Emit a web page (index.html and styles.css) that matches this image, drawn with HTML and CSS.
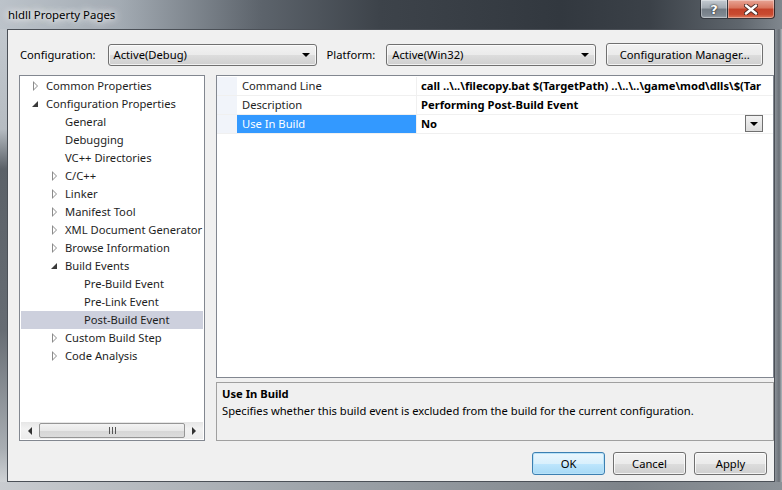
FILE: index.html
```html
<!DOCTYPE html>
<html lang="en">
<head>
    <meta charset="UTF-8">
    <title>hldll Property Pages</title>
    <link rel="stylesheet" href="styles.css">
</head>
<body>
    <div class="window">
        <div class="titlebar">
            <span class="title">hldll Property Pages</span>
            <div class="caption">
                <span class="cap-btn help">?</span>
                <span class="cap-btn close">
                    <svg width="14" height="11" viewBox="0 0 14 11">
                        <path d="M2 1.5 L12 9.5 M12 1.5 L2 9.5" stroke="#4a2a25" stroke-width="4.2" stroke-linecap="round"/>
                        <path d="M2 1.5 L12 9.5 M12 1.5 L2 9.5" stroke="#fff" stroke-width="2.4" stroke-linecap="round"/>
                    </svg>
                </span>
            </div>
        </div>

        <div class="frame-row">
            <div class="frame-side left"></div>
            <div class="client">
                <div class="toolbar">
                    <span class="label">Configuration:</span>
                    <div class="combo combo-config"><span>Active(Debug)</span><i class="arrow"></i></div>
                    <span class="label label-platform">Platform:</span>
                    <div class="combo combo-platform"><span>Active(Win32)</span><i class="arrow"></i></div>
                    <button class="btn btn-manager">Configuration Manager...</button>
                </div>

                <div class="main">
                    <div class="tree">
                        <ul class="tree-list">
                            <li class="lvl0"><i class="exp closed"></i>Common Properties</li>
                            <li class="lvl0"><i class="exp open"></i>Configuration Properties</li>
                            <li class="lvl1"><i class="exp"></i>General</li>
                            <li class="lvl1"><i class="exp"></i>Debugging</li>
                            <li class="lvl1"><i class="exp"></i>VC++ Directories</li>
                            <li class="lvl1"><i class="exp closed"></i>C/C++</li>
                            <li class="lvl1"><i class="exp closed"></i>Linker</li>
                            <li class="lvl1"><i class="exp closed"></i>Manifest Tool</li>
                            <li class="lvl1"><i class="exp closed"></i>XML Document Generator</li>
                            <li class="lvl1"><i class="exp closed"></i>Browse Information</li>
                            <li class="lvl1"><i class="exp open"></i>Build Events</li>
                            <li class="lvl2"><i class="exp"></i>Pre-Build Event</li>
                            <li class="lvl2"><i class="exp"></i>Pre-Link Event</li>
                            <li class="lvl2 selected"><i class="exp"></i>Post-Build Event</li>
                            <li class="lvl1"><i class="exp closed"></i>Custom Build Step</li>
                            <li class="lvl1"><i class="exp closed"></i>Code Analysis</li>
                        </ul>
                        <div class="hscroll">
                            <span class="sc-arrow sc-left"></span>
                            <div class="sc-thumb"><span class="grip"></span></div>
                            <span class="sc-arrow sc-right"></span>
                        </div>
                    </div>

                    <div class="right">
                        <div class="grid">
                            <div class="row">
                                <span class="margin"></span>
                                <span class="name">Command Line</span>
                                <span class="value">call ..\..\filecopy.bat $(TargetPath) ..\..\..\game\mod\dlls\$(Tar</span>
                            </div>
                            <div class="row">
                                <span class="margin"></span>
                                <span class="name">Description</span>
                                <span class="value">Performing Post-Build Event</span>
                            </div>
                            <div class="row active">
                                <span class="margin"></span>
                                <span class="name">Use In Build</span>
                                <span class="value">No<span class="drop"><i class="arrow"></i></span></span>
                            </div>
                        </div>
                        <div class="desc">
                            <div class="desc-title">Use In Build</div>
                            <div class="desc-text">Specifies whether this build event is excluded from the build for the current configuration.</div>
                        </div>
                    </div>
                </div>

                <div class="footer">
                    <button class="btn btn-ok">OK</button>
                    <button class="btn">Cancel</button>
                    <button class="btn">Apply</button>
                </div>
            </div>
            <div class="frame-side right-side"></div>
        </div>
        <div class="frame-bottom"></div>
    </div>
</body>
</html>
```

FILE: styles.css
```css
body {
    margin: 0;
    font-family: "Noto Sans", "Open Sans", sans-serif;
    font-size: 11.2px;
    color: #000;
    background: #6b7178;
}
.window {
    width: 782px;
    height: 490px;
    display: flex;
    flex-direction: column;
    overflow: hidden;
}
.titlebar {
    height: 29px;
    display: flex;
    background: linear-gradient(to right, #bcc3ca 0, #a3abb3 120px, #5d646c 260px, #3d434a 380px, #32383f 560px, #3b4148 650px, #5f666d 740px, #80878e 782px);
}
.title {
    padding-left: 8px;
    line-height: 30px;
    font-size: 11.4px;
    text-shadow: 0 0 6px #fff, 0 0 10px rgba(255, 255, 255, 0.9), 0 0 14px rgba(255, 255, 255, 0.7);
}
.caption {
    margin-left: auto;
    margin-right: 7px;
    display: flex;
    align-self: flex-start;
}
.cap-btn {
    height: 18px;
    display: flex;
    align-items: center;
    justify-content: center;
    border: 1px solid rgba(30, 34, 40, 0.85);
    border-top: none;
    box-shadow: inset 0 0 0 1px rgba(255, 255, 255, 0.35);
}
.help {
    width: 26px;
    border-radius: 0 0 0 4px;
    background: linear-gradient(#c4cbd2 0%, #a1a9b1 45%, #737c85 50%, #7f8891 85%, #9ba3ab 100%);
    color: #fff;
    font-weight: bold;
    font-size: 13px;
    text-shadow: 0 0 2px #222, 0 0 1px #222;
    font-family: "DejaVu Sans", sans-serif;
}
.close {
    width: 46px;
    border-left: none;
    border-radius: 0 0 4px 0;
    background: linear-gradient(#e8a596 0%, #d8735c 45%, #c4422a 50%, #c94a30 80%, #dc7a5c 100%);
}
.frame-row {
    display: flex;
    height: 453px;
}
.frame-side {
    width: 7px;
}
.frame-side.left {
    background: linear-gradient(#c2c8ce 0, #b6bcc2 100px, #5b6168 140px, #666c73 300px, #a9aeb3 420px, #cfd2d5 453px);
}
.frame-side.right-side {
    background: linear-gradient(to right, #8a9097, #6b7178 60%, #b3b8bd);
}
.frame-bottom {
    height: 8px;
    background: linear-gradient(to right, #c9ccd0, #9ea4aa 40%, #7e848a 80%, #8c9298);
}
.client {
    width: 768px;
    box-sizing: border-box;
    background: #f0f0f0;
    border: 1px solid #4b5057;
    overflow: hidden;
}
.toolbar {
    display: flex;
    align-items: center;
    height: 23px;
    margin-top: 13px;
    padding-left: 12px;
}
.label-platform {
    margin-left: 10px;
}
.combo {
    box-sizing: border-box;
    height: 22px;
    display: flex;
    align-items: center;
    padding: 0 6px 0 5px;
    border: 1px solid #707070;
    border-radius: 3px;
    background: linear-gradient(#f2f2f2 0%, #ebebeb 50%, #dddddd 51%, #cfcfcf 100%);
    box-shadow: inset 0 0 0 1px rgba(255, 255, 255, 0.7);
}
.combo span {
    flex: 1;
}
.combo-config {
    width: 209px;
    margin-left: 12px;
}
.combo-platform {
    width: 210px;
    margin-left: 11px;
}
.arrow {
    width: 0;
    height: 0;
    border-left: 4px solid transparent;
    border-right: 4px solid transparent;
    border-top: 4px solid #000;
}
.btn {
    box-sizing: border-box;
    height: 23px;
    width: 73px;
    padding: 0;
    font-family: inherit;
    font-size: 11.2px;
    color: #000;
    border: 1px solid #707070;
    border-radius: 3px;
    background: linear-gradient(#f2f2f2 0%, #ebebeb 50%, #dddddd 51%, #cfcfcf 100%);
    box-shadow: inset 0 0 0 1px rgba(255, 255, 255, 0.75);
}
.btn-manager {
    width: 157px;
    margin-left: 10px;
}
.btn-ok {
    border-color: #3c7fb1;
    background: linear-gradient(#eaf6fd 0%, #d9f0fc 50%, #bee6fd 51%, #a7d9f5 100%);
    box-shadow: inset 0 0 0 1px #b8e2f8;
}
.main {
    display: flex;
    margin-top: 9px;
    padding-left: 11px;
    gap: 11px;
    height: 366px;
}
.tree {
    box-sizing: border-box;
    width: 186px;
    border: 1px solid #828790;
    background: #fff;
    display: flex;
    flex-direction: column;
    padding: 1px;
}
.tree-list {
    list-style: none;
    margin: 0;
    padding: 0;
    flex: 1;
    overflow: hidden;
}
.tree-list li {
    height: 18px;
    line-height: 18px;
    display: flex;
    align-items: center;
    white-space: nowrap;
    color: #1e1e1e;
}
.tree-list li.lvl0 { padding-left: 11px; }
.tree-list li.lvl1 { padding-left: 30px; }
.tree-list li.lvl2 { padding-left: 49px; }
.tree-list li.selected {
    background: #cdd0dd;
}
.exp {
    width: 14px;
    height: 10px;
    flex: none;
    position: relative;
}
.exp.closed::before {
    content: "";
    position: absolute;
    left: 1px;
    top: 0;
    border-top: 5px solid transparent;
    border-bottom: 5px solid transparent;
    border-left: 5px solid #8b8b8b;
}
.exp.closed::after {
    content: "";
    position: absolute;
    left: 2px;
    top: 2px;
    border-top: 3px solid transparent;
    border-bottom: 3px solid transparent;
    border-left: 3px solid #fff;
}
.exp.open::before {
    content: "";
    position: absolute;
    left: 0;
    top: 2px;
    border-left: 6px solid transparent;
    border-bottom: 6px solid #3a3a3a;
}
.hscroll {
    height: 17px;
    display: flex;
    align-items: center;
    background: linear-gradient(#e6e6e6, #f2f2f2 40%, #ececec);
}
.sc-arrow {
    width: 18px;
    display: flex;
    justify-content: center;
}
.sc-left::before {
    content: "";
    border-top: 4px solid transparent;
    border-bottom: 4px solid transparent;
    border-right: 4px solid #333;
}
.sc-right::before {
    content: "";
    border-top: 4px solid transparent;
    border-bottom: 4px solid transparent;
    border-left: 4px solid #333;
}
.sc-thumb {
    flex: 1;
    height: 15px;
    box-sizing: border-box;
    border: 1px solid #959595;
    border-radius: 2px;
    background: linear-gradient(#f3f3f3 0%, #e8e8e8 50%, #d6d6d6 51%, #dcdcdc 100%);
    display: flex;
    align-items: center;
    justify-content: center;
}
.grip {
    width: 7px;
    height: 7px;
    background: repeating-linear-gradient(to right, #555 0, #555 1px, transparent 1px, transparent 3px);
}
.right {
    flex: 1;
    min-width: 0;
    display: flex;
    flex-direction: column;
    gap: 4px;
}
.grid {
    box-sizing: border-box;
    height: 303px;
    border: 1px solid #828790;
    background: #fff;
    padding-top: 1px;
}
.row {
    display: flex;
    height: 19px;
    box-sizing: border-box;
    border-bottom: 1px solid #f0f0f0;
    white-space: nowrap;
}
.margin {
    width: 20px;
    flex: none;
    background: #f1f4fa;
}
.name {
    width: 180px;
    flex: none;
    box-sizing: border-box;
    padding-left: 5px;
    line-height: 18px;
    border-right: 1px solid #f0f0f0;
    color: #1e1e1e;
}
.value {
    flex: 1;
    min-width: 0;
    padding-left: 4px;
    line-height: 18px;
    font-weight: bold;
    overflow: hidden;
    display: flex;
}
.row.active .name {
    background: #3399ff;
    color: #fff;
}
.drop {
    margin-left: auto;
    margin-right: 10px;
    width: 18px;
    height: 17px;
    box-sizing: border-box;
    border: 1px solid #707070;
    background: linear-gradient(#f2f2f2, #dcdcdc);
    display: flex;
    align-items: center;
    justify-content: center;
}
.desc {
    box-sizing: border-box;
    flex: 1;
    border: 1px solid #a0a0a0;
    padding: 2px 5px;
}
.desc-title {
    font-weight: bold;
    line-height: 17px;
}
.desc-text {
    line-height: 17px;
}
.footer {
    display: flex;
    justify-content: flex-end;
    gap: 8px;
    margin-top: 11px;
    padding-right: 7px;
}
```
